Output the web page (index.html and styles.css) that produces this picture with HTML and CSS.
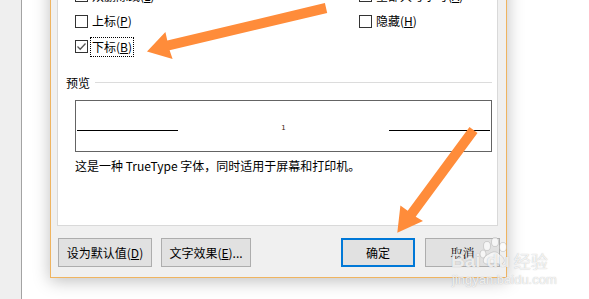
FILE: index.html
```html
<!DOCTYPE html>
<html lang="zh-CN">
<head>
  <meta charset="UTF-8" />
  <title>字体 - 效果</title>
  <link rel="stylesheet" href="styles.css">
</head>
<body>
  <div class="screen">
    <div class="side"></div>
    <div class="gap"></div>

    <div class="dialog">
      <div class="panel">
        <div class="options">
          <div class="option"><span class="box"></span><span class="label">双删除线(<u>L</u>)</span></div>
          <div class="option"><span class="box"></span><span class="label">全部大写字母(<u>A</u>)</span></div>
          <div class="option"><span class="box"></span><span class="label">上标(<u>P</u>)</span></div>
          <div class="option"><span class="box"></span><span class="label">隐藏(<u>H</u>)</span></div>
          <div class="option">
            <span class="box checked">
              <svg width="11" height="11" viewBox="0 0 11 11"><polyline points="1.5,5.5 4.2,8.2 9.5,2.5" fill="none" stroke="#555" stroke-width="1.3"/></svg>
            </span>
            <span class="label focused">下标(<u>B</u>)</span>
          </div>
        </div>

        <div class="legend">
          <span>预览</span>
          <span class="rule"></span>
        </div>

        <div class="preview">
          <span class="pline"></span>
          <span class="sample">1</span>
          <span class="pline"></span>
        </div>

        <div class="desc">这是一种 TrueType 字体，同时适用于屏幕和打印机。</div>
      </div>

      <div class="buttons">
        <button class="btn wide">设为默认值(<u>D</u>)</button>
        <button class="btn effects">文字效果(<u>E</u>)...</button>
        <span class="spacer"></span>
        <button class="btn primary">确定</button>
        <button class="btn cancel">取消</button>
      </div>
    </div>

    <svg class="arrows" width="589" height="299" viewBox="0 0 589 299">
      <polygon points="324.9,3.1 167.3,40.5 165.4,32 147,51.5 172.6,59 169.6,50.3 327.2,12.9" fill="#ff8c3a"/>
      <polygon points="469.5,127 407.7,210.7 400.4,205.4 397.3,232.7 423,221 415.7,216.7 477.5,133" fill="#ff8c3a"/>
    </svg>

    <div class="watermark">
      <div class="wm-top">
        <span class="wm-bai">Bai</span>
        <svg class="paw" width="30" height="30" viewBox="0 0 30 30">
          <ellipse cx="8" cy="9" rx="3.5" ry="4.5"/>
          <ellipse cx="16" cy="5" rx="3.5" ry="4.5"/>
          <ellipse cx="24" cy="10" rx="3.5" ry="4.5"/>
          <ellipse cx="4" cy="17" rx="3" ry="4"/>
          <path d="M8 27 C2 27 4 19 10 17 C14 14 18 14 21 18 C27 21 26 28 20 27 C16 26 13 26 8 27 Z"/>
        </svg>
        <span class="wm-du">du</span>
        <span class="wm-jy">经验</span>
      </div>
      <div class="wm-url">jingyan.baidu.com</div>
    </div>
  </div>
</body>
</html>
```

FILE: styles.css
```css
body {
  margin: 0;
  background: #fff;
  font-family: "Noto Sans CJK SC", "Noto Sans", sans-serif;
  font-size: 12px;
  color: #000;
  overflow: hidden;
}

.screen {
  position: relative;
  display: flex;
  width: 589px;
  height: 299px;
  overflow: hidden;
}

.side {
  flex: none;
  width: 21px;
  background: #efefef;
  border-right: 1px solid #a3a3a3;
}

.gap {
  flex: none;
  width: 28px;
}

.dialog {
  flex: none;
  align-self: flex-start;
  width: 457px;
  box-sizing: border-box;
  margin-top: -40px;
  padding: 6px 8px 10px 6px;
  background: #f0f0f0;
  border: 1px solid #efb460;
  box-shadow: 0 3px 16px rgba(0, 0, 0, 0.26);
}

.panel {
  background: #fff;
  border: 1px solid #d9d9d9;
  padding: 14.75px 0 51px 0;
}

.options {
  display: grid;
  grid-template-columns: 284px 1fr;
  grid-auto-rows: 25.5px;
  margin-left: 17px;
}

.option {
  display: flex;
  align-items: center;
}

.box {
  flex: none;
  width: 13px;
  height: 13px;
  box-sizing: border-box;
  border: 1px solid #333;
  background: #fff;
  display: flex;
  align-items: center;
  justify-content: center;
}

.box svg {
  display: block;
}

.label {
  margin-left: 2px;
  padding: 0 1px;
  line-height: 18px;
  border: 1px dotted transparent;
  white-space: nowrap;
}

.label.focused {
  border-color: #000;
}

.legend {
  display: flex;
  align-items: center;
  height: 14px;
  margin: 15.75px 5px 0 8px;
}

.rule {
  flex: 1;
  height: 1px;
  margin-left: 5px;
  background: #dcdcdc;
}

.preview {
  display: flex;
  align-items: flex-start;
  height: 52px;
  box-sizing: border-box;
  margin: 11px 5px 0 17px;
  padding: 24px 1px 0 1px;
  border: 1px solid #646464;
}

.pline {
  flex: none;
  width: 101px;
  height: 1px;
  margin-top: 5px;
  background: #000;
}

.sample {
  flex: 1;
  text-align: center;
  font-family: "DejaVu Sans", sans-serif;
  font-size: 7px;
  line-height: 7px;
  color: #3a1a10;
}

.desc {
  margin: 6px 0 0 17px;
  line-height: 16px;
  white-space: nowrap;
}

.buttons {
  display: flex;
  margin: 12px -2px 0 0;
  padding: 0 0 0 1px;
}

.btn {
  height: 29px;
  box-sizing: border-box;
  padding: 0;
  background: #e1e1e1;
  border: 1px solid #adadad;
  font-family: inherit;
  font-size: 12px;
  color: #000;
  white-space: nowrap;
}

.btn.wide {
  width: 94px;
}

.btn.effects {
  width: 90px;
  margin-left: 9px;
}

.spacer {
  flex: 1;
}

.btn.primary {
  width: 74px;
  border: 2px solid #0078d7;
}

.btn.cancel {
  width: 75px;
  margin-left: 10px;
  font-family: "Noto Serif CJK SC", "Noto Sans CJK SC", serif;
}

.arrows {
  position: absolute;
  left: 0;
  top: 0;
  pointer-events: none;
}

.watermark {
  position: absolute;
  left: 451px;
  top: 239px;
  color: rgba(255, 255, 255, 0.8);
  text-shadow: 0 0 1px rgba(120, 120, 120, 0.55);
  pointer-events: none;
}

.wm-top {
  display: flex;
  align-items: flex-end;
  height: 32px;
}

.wm-bai, .wm-du {
  font-family: "Liberation Sans", sans-serif;
  font-size: 19px;
  font-weight: bold;
  line-height: 20px;
}

.paw {
  margin: 0 -22px 4px -2px;
  fill: rgba(255, 255, 255, 0.7);
  stroke: rgba(150, 150, 150, 0.45);
  stroke-width: 0.8;
}

.wm-jy {
  margin-left: 4px;
  font-size: 17px;
  line-height: 20px;
}

.wm-url {
  font-family: "Liberation Sans", sans-serif;
  font-size: 13px;
  line-height: 18px;
  margin-left: 1px;
}
```
